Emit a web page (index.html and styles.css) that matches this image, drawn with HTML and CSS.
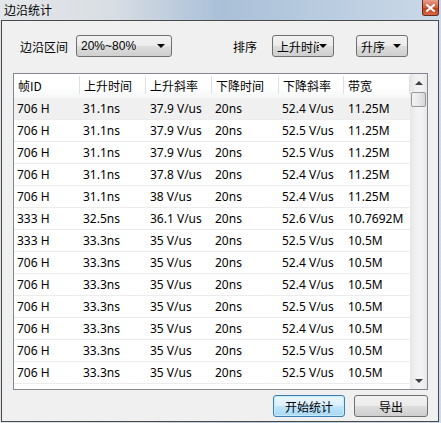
FILE: index.html
```html
<!DOCTYPE html>
<html lang="zh-CN">
<head>
<meta charset="utf-8">
<title>边沿统计</title>
<link rel="stylesheet" href="styles.css">
</head>
<body>
<div class="window">
  <div class="titlebar">
    <span class="title">边沿统计</span>
    <div class="close">
      <svg width="9" height="8" viewBox="0 0 9 8"><path d="M1 1 L8 7 M8 1 L1 7" stroke="#fff" stroke-width="2" stroke-linecap="square"/></svg>
    </div>
  </div>
  <div class="client">
    <div class="controls">
      <span class="label">边沿区间</span>
      <div class="combo combo-range"><span class="combo-text">20%~80%</span><span class="arrow"></span></div>
      <span class="label label-sort">排序</span>
      <div class="combo combo-key"><span class="combo-text clip">上升时间</span><span class="arrow"></span></div>
      <div class="combo combo-order"><span class="combo-text">升序</span><span class="arrow"></span></div>
    </div>
    <div class="list">
      <div class="grid">
        <div class="head">
          <div class="hc c1">帧ID</div>
          <div class="hc c2">上升时间</div>
          <div class="hc c3">上升斜率</div>
          <div class="hc c4">下降时间</div>
          <div class="hc c5">下降斜率</div>
          <div class="hc c6">带宽</div>
        </div>
        <div class="row sel"><div class="c1">706 H</div><div class="c2">31.1ns</div><div class="c3">37.9 V/us</div><div class="c4">20ns</div><div class="c5">52.4 V/us</div><div class="c6">11.25M</div></div>
        <div class="row"><div class="c1">706 H</div><div class="c2">31.1ns</div><div class="c3">37.9 V/us</div><div class="c4">20ns</div><div class="c5">52.5 V/us</div><div class="c6">11.25M</div></div>
        <div class="row"><div class="c1">706 H</div><div class="c2">31.1ns</div><div class="c3">37.9 V/us</div><div class="c4">20ns</div><div class="c5">52.5 V/us</div><div class="c6">11.25M</div></div>
        <div class="row"><div class="c1">706 H</div><div class="c2">31.1ns</div><div class="c3">37.8 V/us</div><div class="c4">20ns</div><div class="c5">52.4 V/us</div><div class="c6">11.25M</div></div>
        <div class="row"><div class="c1">706 H</div><div class="c2">31.1ns</div><div class="c3">38 V/us</div><div class="c4">20ns</div><div class="c5">52.4 V/us</div><div class="c6">11.25M</div></div>
        <div class="row"><div class="c1">333 H</div><div class="c2">32.5ns</div><div class="c3">36.1 V/us</div><div class="c4">20ns</div><div class="c5">52.6 V/us</div><div class="c6">10.7692M</div></div>
        <div class="row"><div class="c1">333 H</div><div class="c2">33.3ns</div><div class="c3">35 V/us</div><div class="c4">20ns</div><div class="c5">52.5 V/us</div><div class="c6">10.5M</div></div>
        <div class="row"><div class="c1">706 H</div><div class="c2">33.3ns</div><div class="c3">35 V/us</div><div class="c4">20ns</div><div class="c5">52.4 V/us</div><div class="c6">10.5M</div></div>
        <div class="row"><div class="c1">706 H</div><div class="c2">33.3ns</div><div class="c3">35 V/us</div><div class="c4">20ns</div><div class="c5">52.4 V/us</div><div class="c6">10.5M</div></div>
        <div class="row"><div class="c1">706 H</div><div class="c2">33.3ns</div><div class="c3">35 V/us</div><div class="c4">20ns</div><div class="c5">52.5 V/us</div><div class="c6">10.5M</div></div>
        <div class="row"><div class="c1">706 H</div><div class="c2">33.3ns</div><div class="c3">35 V/us</div><div class="c4">20ns</div><div class="c5">52.4 V/us</div><div class="c6">10.5M</div></div>
        <div class="row"><div class="c1">706 H</div><div class="c2">33.3ns</div><div class="c3">35 V/us</div><div class="c4">20ns</div><div class="c5">52.5 V/us</div><div class="c6">10.5M</div></div>
        <div class="row"><div class="c1">706 H</div><div class="c2">33.3ns</div><div class="c3">35 V/us</div><div class="c4">20ns</div><div class="c5">52.5 V/us</div><div class="c6">10.5M</div></div>
        <div class="row"><div class="c1"></div><div class="c2"></div><div class="c3"></div><div class="c4"></div><div class="c5"></div><div class="c6"></div></div>
      </div>
      <div class="vscroll">
        <div class="sbtn"><span class="tri-up"></span></div>
        <div class="thumb"></div>
        <div class="track"></div>
        <div class="sbtn"><span class="tri-down"></span></div>
      </div>
    </div>
    <div class="buttons">
      <div class="btn btn-default">开始统计</div>
      <div class="btn">导出</div>
    </div>
  </div>
</div>
</body>
</html>
```
FILE: styles.css
```css
html, body {
  margin: 0;
  padding: 0;
}
body {
  width: 441px;
  height: 423px;
  overflow: hidden;
  font-family: "Noto Sans", "Noto Sans CJK SC", sans-serif;
  font-size: 12px;
  color: #000;
}
.window {
  width: 441px;
  height: 423px;
  display: flex;
  flex-direction: column;
  background: linear-gradient(90deg, #dfe3e8 0%, #d4dbe3 30%, #b2c5da 55%, #bccfe2 75%, #cddbea 100%);
}
.titlebar {
  height: 20px;
  display: flex;
  align-items: center;
  padding-left: 4px;
  background: linear-gradient(90deg, #e4e7ea 0%, #d9dee4 25%, #aac0d8 50%, #b8cbdf 72%, #cbd9e8 100%);
}
.title {
  font-family: "Noto Sans CJK SC", sans-serif;
  font-size: 12px;
  line-height: 20px;
  color: #000;
}
.close {
  margin-left: auto;
  margin-right: 2px;
  align-self: flex-start;
  width: 17px;
  height: 16px;
  box-sizing: border-box;
  border: 1px solid #6b2a1e;
  border-top: none;
  border-radius: 0 0 3px 3px;
  background: linear-gradient(#e6a08c, #d25c40 50%, #c0391d 51%, #d66a44);
  display: flex;
  align-items: center;
  justify-content: center;
}
.client {
  flex: 1;
  margin: 0 2px 1px 1px;
  border: 1px solid #4a4a4a;
  background: #f0f0f0;
  display: flex;
  flex-direction: column;
  padding: 0 10px 0 11px;
}
.controls {
  margin-top: 14px;
  height: 22px;
  display: flex;
  align-items: center;
}
.label {
  font-family: "Noto Sans CJK SC", sans-serif;
  margin-left: 7px;
}
.label-sort {
  margin-left: 61px;
}
.combo {
  box-sizing: border-box;
  height: 22px;
  border: 1px solid #707070;
  border-radius: 3px;
  background: linear-gradient(#f2f2f2, #ebebeb 50%, #dddddd 51%, #cfcfcf);
  display: flex;
  align-items: center;
  padding-left: 4px;
  position: relative;
}
.combo-range {
  width: 96px;
  margin-left: 8px;
  font-family: "Liberation Sans", sans-serif;
}
.combo-key {
  width: 62px;
  margin-left: 15px;
}
.combo-order {
  width: 52px;
  margin-left: 22px;
}
.combo-text {
  white-space: nowrap;
  overflow: hidden;
  font-family: "Liberation Sans", "Noto Sans CJK SC", sans-serif;
}
.clip {
  width: 42px;
}
.arrow {
  margin-left: auto;
  margin-right: 6px;
  width: 0;
  height: 0;
  border-left: 4px solid transparent;
  border-right: 4px solid transparent;
  border-top: 4px solid #000;
}
.list {
  margin-top: 16px;
  height: 317px;
  box-sizing: border-box;
  border: 1px solid #828790;
  background: #fff;
  display: flex;
  overflow: hidden;
}
.grid {
  width: 396px;
  display: flex;
  flex-direction: column;
}
.head {
  height: 24px;
  flex: none;
  display: flex;
  background: linear-gradient(#ffffff, #ffffff 55%, #f5f6f7);
}
.head .hc {
  box-sizing: border-box;
  height: 18px;
  margin-top: 2px;
  border-right: 1px solid #dde0e4;
  padding-left: 4px;
  line-height: 20px;
  font-family: "Noto Sans CJK SC", sans-serif;
  white-space: nowrap;
}
.head .c1 {
  font-family: "Noto Sans CJK SC", sans-serif;
}
.c1 { width: 66px; }
.c2 { width: 66px; }
.c3 { width: 66px; }
.c4 { width: 67px; }
.c5 { width: 65px; }
.c6 { width: 66px; }
.row {
  height: 22px;
  flex: none;
  box-sizing: border-box;
  border-bottom: 1px solid #ececec;
  display: flex;
  align-items: center;
}
.row > div {
  box-sizing: border-box;
  padding-left: 3px;
  white-space: nowrap;
  font-family: "Noto Sans", sans-serif;
  font-size: 12px;
  line-height: 21px;
}
.row .c3, .row .c6 { padding-left: 4px; }
.row.sel {
  background: #f0f0f0;
}
.vscroll {
  width: 17px;
  flex: none;
  display: flex;
  flex-direction: column;
  background: linear-gradient(90deg, #e6e6e6, #f2f2f2 40%, #f2f2f2 70%, #e6e6e6);
}
.sbtn {
  height: 17px;
  flex: none;
  display: flex;
  align-items: center;
  justify-content: center;
}
.tri-up {
  width: 0;
  height: 0;
  border-left: 4px solid transparent;
  border-right: 4px solid transparent;
  border-bottom: 4px solid #404040;
}
.tri-down {
  width: 0;
  height: 0;
  border-left: 4px solid transparent;
  border-right: 4px solid transparent;
  border-top: 4px solid #404040;
}
.thumb {
  margin: 1px 1px 0 1px;
  height: 15px;
  flex: none;
  box-sizing: border-box;
  border: 1px solid #979797;
  border-radius: 2px;
  background: linear-gradient(90deg, #f3f3f3, #e8e8e8 50%, #d6d6d6);
}
.track {
  flex: 1;
}
.buttons {
  margin-top: 5px;
  display: flex;
  justify-content: flex-end;
  gap: 9px;
}
.btn {
  box-sizing: border-box;
  width: 74px;
  height: 22px;
  border: 1px solid #707070;
  border-radius: 3px;
  background: linear-gradient(#f2f2f2, #ebebeb 50%, #dddddd 51%, #cfcfcf);
  display: flex;
  align-items: center;
  justify-content: center;
  font-family: "Noto Sans CJK SC", sans-serif;
}
.btn-default {
  width: 72px;
  border-color: #3c7fb1;
  background: linear-gradient(#eaf6fd, #d9f0fc 50%, #bee6fd 51%, #a7d9f5);
  box-shadow: inset 0 0 0 1px #c7ebfd;
}
```
